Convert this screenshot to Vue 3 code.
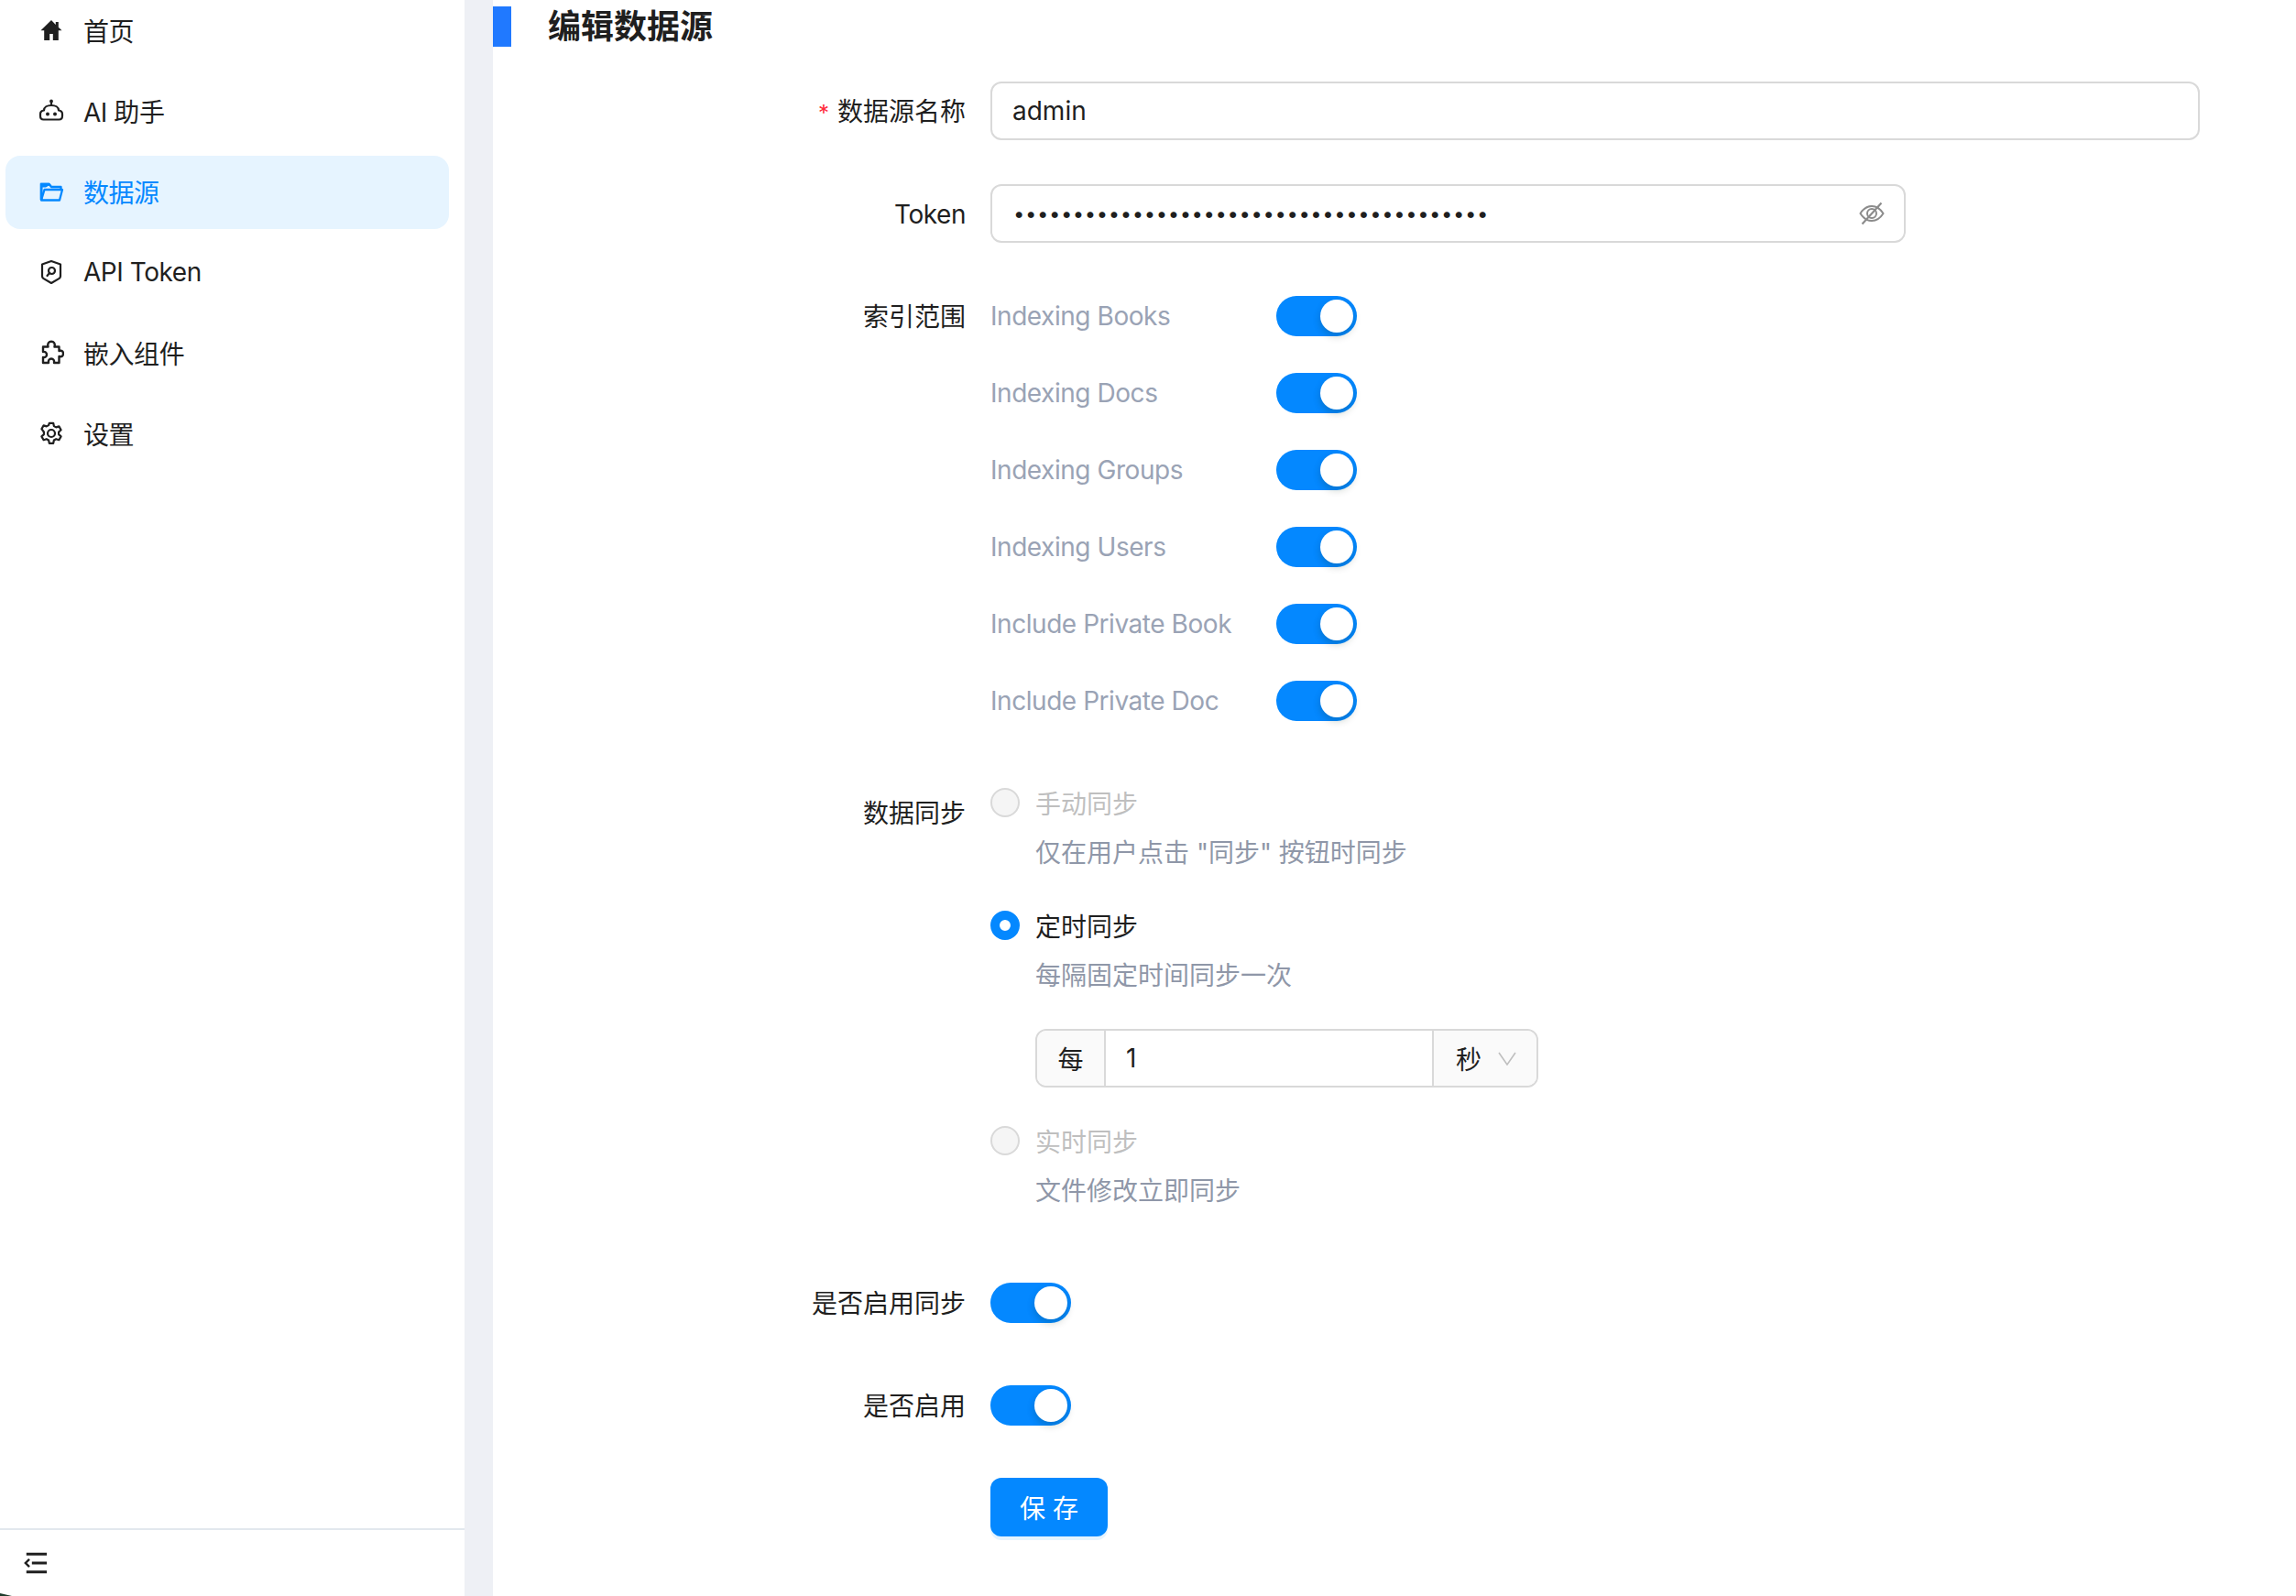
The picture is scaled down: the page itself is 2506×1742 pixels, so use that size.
<script setup>
const navItems = [
  { label: '首页', icon: 'home' },
  { label: 'AI 助手', icon: 'robot' },
  { label: '数据源', icon: 'folder', active: true },
  { label: 'API Token', icon: 'shield' },
  { label: '嵌入组件', icon: 'puzzle' },
  { label: '设置', icon: 'gear' }
]
const scopes = ['Indexing Books', 'Indexing Docs', 'Indexing Groups', 'Indexing Users', 'Include Private Book', 'Include Private Doc']
const token = 'x'.repeat(40)
</script>

<template>
  <div class="page">
    <aside class="sidebar">
      <nav class="nav">
        <a v-for="item in navItems" :key="item.label" class="nav-item" :class="{ active: item.active }">
          <svg class="nav-icon" viewBox="0 0 28 28" fill="none" stroke="currentColor" stroke-width="2.200" stroke-linejoin="round" stroke-linecap="round">
            <template v-if="item.icon === 'home'">
              <path fill="currentColor" stroke="none" d="M14 3 2.500 14.300h3.700V25h6v-7h3.600v7h6V14.300h3.700L21.800 10.800V5h-3v3z" />
            </template>
            <template v-else-if="item.icon === 'robot'">
              <circle cx="14" cy="3.500" r="1.900" fill="currentColor" stroke="none" />
              <path d="M14 5v3M6 13.500C6 10 9.500 8 14 8s8 2 8 5.500c2.500.3 4 1.800 4 4v2c0 2.500-1.500 4-3.500 4h-17C3.500 23.500 2 22 2 19.500v-2c0-2.200 1.500-3.700 4-4z" />
              <circle cx="10" cy="17.500" r="2" fill="currentColor" stroke="none" />
              <circle cx="18" cy="17.500" r="2" fill="currentColor" stroke="none" />
            </template>
            <template v-else-if="item.icon === 'folder'">
              <path stroke-width="2.300" d="M3 23.500V6h8.500l2.500 3H24.500v3M3.200 23.500h19.800l3-11.500H6.500L3.500 22" />
              <path fill="currentColor" stroke="none" d="M1.800 4.800h10.200l2.500 3h-3.500L8 9.500H4.500V23H1.800z" />
            </template>
            <template v-else-if="item.icon === 'shield'">
              <path d="M14 2 4 5.500v13c0 1 .5 1.800 1.300 2.400L14 26l8.700-5.100c.8-.6 1.300-1.400 1.300-2.400v-13z" />
              <circle cx="14.500" cy="12.500" r="3.500" />
              <path d="m12 15-2.500 3" />
            </template>
            <template v-else-if="item.icon === 'puzzle'">
              <path stroke-width="2.400" d="M5 7.500h5.500C9.500 3.500 11.500 1.800 14 1.800s4.500 1.700 3.500 5.700h5V12c3.500-1 4.500 1 4.500 3s-1 4-4.500 3v7H17c.5-3-1-4.500-3-4.500s-3.500 1.500-3 4.500H5v-6c2.500.5 4-1 4-3s-1.500-3.500-4-3z" />
            </template>
            <template v-else>
              <circle cx="14" cy="14" r="4" />
              <path d="M11.800 2.800h4.400l.7 3.300 2.300 1.300 3.200-1 2.200 3.800-2.500 2.300v2.600l2.500 2.300-2.200 3.800-3.200-1-2.300 1.300-.7 3.300h-4.400l-.7-3.300-2.300-1.300-3.200 1-2.200-3.800 2.500-2.300v-2.600L3.400 9.200l2.200-3.800 3.200 1 2.300-1.300z" />
            </template>
          </svg>
          <span>{{ item.label }}</span>
        </a>
      </nav>
      <footer class="side-foot">
        <svg class="collapse" viewBox="0 0 28 28" fill="none" stroke="currentColor" stroke-width="3">
          <path d="M3 3.500h24M9.500 14H27M3 24.500h24" />
          <path stroke-width="2.600" d="M6.500 9.500 2 14l4.500 4.500" />
        </svg>
        <i class="corner"></i>
      </footer>
    </aside>

    <main class="main">
      <header class="head">
        <i class="head-bar"></i>
        <h1>编辑数据源</h1>
      </header>

      <form class="form" @submit.prevent>
        <div class="row">
          <label class="label"><b class="req">*</b>数据源名称</label>
          <input class="input" value="admin" />
        </div>

        <div class="row">
          <label class="label latin">Token</label>
          <div class="input token">
            <input class="token-field" type="password" :value="token" />
            <svg class="eye" viewBox="0 0 28 28" fill="none" stroke="#8c8c8c" stroke-width="2">
              <path d="M1.500 14C5 8.500 9 6 14 6s9 2.500 12.500 8C23 19.500 19 22 14 22S5 19.500 1.500 14z" />
              <circle cx="14" cy="14" r="5" />
              <path d="M3.500 25.500 24.500 2.500" stroke-width="2.200" />
            </svg>
          </div>
        </div>

        <div class="row">
          <label class="label">索引范围</label>
          <div class="scopes">
            <div v-for="s in scopes" :key="s" class="scope">
              <span class="scope-name latin">{{ s }}</span>
              <span class="switch"><i></i></span>
            </div>
          </div>
        </div>

        <div class="row sync">
          <label class="label">数据同步</label>
          <div class="radios">
            <div class="radio-line off"><i class="radio"></i>手动同步</div>
            <div class="desc">仅在用户点击 "同步" 按钮时同步</div>

            <div class="radio-line"><i class="radio on"></i>定时同步</div>
            <div class="desc">每隔固定时间同步一次</div>

            <div class="compound">
              <span class="addon">每</span>
              <input class="num" value="1" />
              <span class="addon unit">秒
                <svg viewBox="0 0 20 15" fill="none" stroke="#bfbfbf" stroke-width="1.600"><path d="m1 1 9 13L19 1" /></svg>
              </span>
            </div>

            <div class="radio-line off"><i class="radio"></i>实时同步</div>
            <div class="desc last">文件修改立即同步</div>
          </div>
        </div>

        <div class="row">
          <label class="label">是否启用同步</label>
          <div class="ctrl"><span class="switch"><i></i></span></div>
        </div>

        <div class="row">
          <label class="label">是否启用</label>
          <div class="ctrl"><span class="switch"><i></i></span></div>
        </div>

        <div class="row">
          <span></span>
          <button class="save" type="submit">保 存</button>
        </div>
      </form>
    </main>
  </div>
</template>

<style>
html, body { margin: 0; background: #fff; }
</style>

<style scoped>
.page {
  display: flex;
  width: 2506px;
  height: 1742px;
  overflow: hidden;
  background: #fff;
  color: #1f1f1f;
  font-family: Inter, "Noto Sans CJK SC", sans-serif;
  font-size: 28px;
}
.latin { letter-spacing: -.45px; }
.sidebar {
  position: relative;
  width: 507px;
  flex: none;
  display: flex;
  flex-direction: column;
}
.nav {
  flex: 1;
  display: flex;
  flex-direction: column;
  gap: 8px;
  margin-top: -6px;
  padding-left: 6px;
  padding-right: 17px;
  letter-spacing: -.45px;
}
.nav-item {
  box-sizing: border-box;
  height: 80px;
  display: flex;
  align-items: center;
  gap: 21px;
  padding: 0 0 2px 36px;
  border-radius: 16px;
}
.nav-item.active { background: #e6f4ff; color: #0488ff; }
.nav-icon { width: 28px; height: 28px; flex: none; }
.side-foot {
  height: 72px;
  border-top: 2px solid #e2e8ee;
  display: flex;
  align-items: center;
  padding-left: 26px;
}
.collapse { width: 26px; height: 26px; }
.corner {
  position: absolute;
  left: 0;
  bottom: 0;
  width: 13px;
  height: 3px;
  background: #1d3b2b;
  clip-path: polygon(0 0, 100% 100%, 0 100%);
}
.main {
  flex: 1;
  border-left: 31px solid #eef0f5;
}
.head {
  display: flex;
  align-items: center;
  gap: 40px;
  height: 44px;
  margin-top: 7px;
}
.head-bar { width: 20px; height: 44px; background: #2079ff; }
h1 { margin: 0; font-size: 36px; font-weight: 700; line-height: 46px; }
.form {
  display: flex;
  flex-direction: column;
  gap: 48px;
  margin-top: 38px;
}
.row {
  display: grid;
  grid-template-columns: 516px 1fr;
  column-gap: 27px;
  align-items: start;
}
.label {
  text-align: right;
  height: 64px;
  line-height: 66px;
  overflow: hidden;
}
.req { color: #ff2b3a; font-weight: 400; margin-right: 9px; font-size: 24px; }
.input {
  box-sizing: border-box;
  width: 1320px;
  height: 64px;
  border: 2px solid #d9d9d9;
  border-radius: 12px;
  padding: 0 22px;
  font: inherit;
  color: inherit;
  outline: none;
  background: #fff;
}
.token {
  width: 999px;
  display: flex;
  align-items: center;
}
.token-field {
  flex: 1;
  min-width: 0;
  border: 0;
  outline: 0;
  padding: 0 0 0 1px;
  font: inherit;
  font-size: 22px;
  color: inherit;
  letter-spacing: .6px;
}
.eye { width: 28px; height: 28px; flex: none; margin-right: -1px; }
.scopes {
  display: flex;
  flex-direction: column;
  gap: 40px;
  padding-top: 10px;
}
.scope { display: flex; align-items: center; height: 44px; }
.scope-name { width: 312px; color: #9aa3b5; }
.switch {
  display: block;
  position: relative;
  width: 88px;
  height: 44px;
  border-radius: 22px;
  background: #0488ff;
}
.switch i {
  position: absolute;
  top: 4px;
  right: 4px;
  width: 36px;
  height: 36px;
  border-radius: 50%;
  background: #fff;
  box-shadow: 0 4px 8px rgba(0, 35, 11, .2);
}
.ctrl { padding-top: 10px; height: 54px; }
.sync { margin-top: 20px; }
.radios { display: flex; flex-direction: column; margin-top: -1px; }
.radio-line {
  display: flex;
  align-items: center;
  gap: 17px;
  height: 44px;
}
.radio-line.off { color: #bfbfbf; }
.radio {
  box-sizing: border-box;
  width: 32px;
  height: 32px;
  border-radius: 50%;
  border: 2px solid #d9d9d9;
  background: #f5f5f5;
}
.radio.on { border: 10px solid #0488ff; background: #fff; }
.desc {
  height: 44px;
  line-height: 44px;
  margin: 11px 0 35px 49px;
  color: #8f97a8;
}
.desc.last { margin-bottom: 20px; }
.compound {
  box-sizing: border-box;
  display: flex;
  align-items: stretch;
  width: 549px;
  height: 64px;
  margin: 1px 0 36px 49px;
  border: 2px solid #d9d9d9;
  border-radius: 12px;
  overflow: hidden;
}
.addon {
  display: flex;
  align-items: center;
  justify-content: center;
  gap: 10px;
  width: 73px;
  background: #fafafa;
  border-right: 2px solid #d9d9d9;
}
.num {
  flex: 1;
  min-width: 0;
  border: 0;
  outline: 0;
  padding: 0 22px;
  font: inherit;
  color: inherit;
}
.unit {
  box-sizing: border-box;
  width: 114px;
  justify-content: flex-start;
  gap: 18px;
  padding-left: 24px;
  border-right: 0;
  border-left: 2px solid #d9d9d9;
}
.unit svg { width: 20px; height: 15px; }
.save {
  width: 128px;
  height: 64px;
  margin-top: -1px;
  border: 0;
  border-radius: 12px;
  padding: 0;
  background: #0488ff;
  color: #fff;
  font: inherit;
  box-shadow: 0 4px 0 rgba(5, 145, 255, .1);
}
</style>
